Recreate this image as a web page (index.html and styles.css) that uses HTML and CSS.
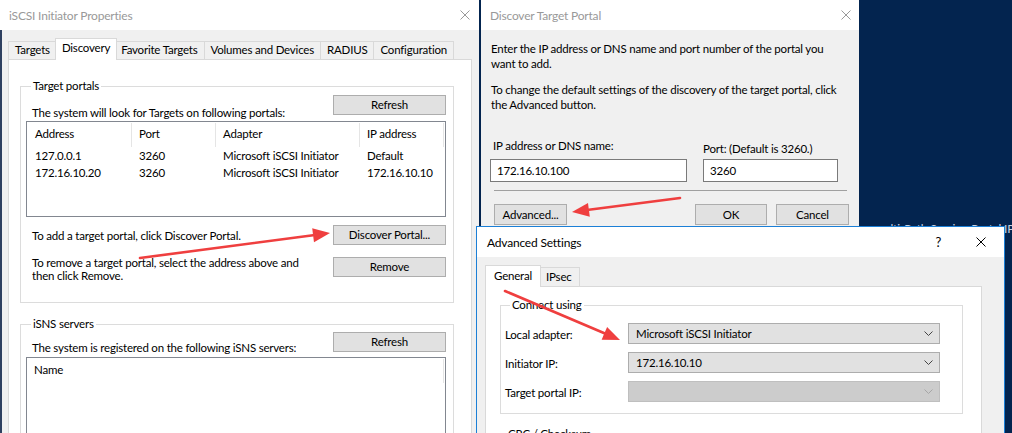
FILE: index.html
```html
<!DOCTYPE html>
<html>
<head>
<meta charset="utf-8">
<title>iSCSI Initiator</title>
<link rel="stylesheet" href="styles.css">
</head>
<body>
<div class="desktop">
  <div class="bgtext">ulti-Path  Session  Portal  IP Address  8</div>

  <section class="win win-props">
    <header class="titlebar inactive">
      <span class="title">iSCSI Initiator Properties</span>
      <span class="ctrls"><svg class="xicon" viewBox="0 0 10 10"><path d="M0.5 0.5L9.5 9.5M9.5 0.5L0.5 9.5"/></svg></span>
    </header>
    <div class="win-body props-body">
      <div class="tabs">
        <div class="tab">Targets</div>
        <div class="tab sel">Discovery</div>
        <div class="tab">Favorite Targets</div>
        <div class="tab">Volumes and Devices</div>
        <div class="tab">RADIUS</div>
        <div class="tab">Configuration</div>
      </div>
      <div class="tabpanel props-panel">
        <fieldset class="group gp-portals">
          <legend>Target portals</legend>
          <div class="row row-top">
            <span class="desc desc-top">The system will look for Targets on following portals:</span>
            <button class="btn btn-wide">Refresh</button>
          </div>
          <div class="listbox lb-portals">
            <div class="lv-grid lv-head">
              <span>Address</span><span>Port</span><span>Adapter</span><span>IP address</span>
            </div>
            <div class="lv-grid lv-row">
              <span>127.0.0.1</span><span>3260</span><span>Microsoft iSCSI Initiator</span><span>Default</span>
            </div>
            <div class="lv-grid lv-row">
              <span>172.16.10.20</span><span>3260</span><span>Microsoft iSCSI Initiator</span><span>172.16.10.10</span>
            </div>
          </div>
          <div class="row row-add">
            <span class="desc">To add a target portal, click Discover Portal.</span>
            <button class="btn btn-wide">Discover Portal...</button>
          </div>
          <div class="row row-remove">
            <span class="desc desc-2l">To remove a target portal, select the address above and<br>then click Remove.</span>
            <button class="btn btn-wide">Remove</button>
          </div>
        </fieldset>

        <fieldset class="group gp-isns">
          <legend>iSNS servers</legend>
          <div class="row row-top">
            <span class="desc desc-isns">The system is registered on the following iSNS servers:</span>
            <button class="btn btn-wide">Refresh</button>
          </div>
          <div class="listbox lb-isns">
            <div class="lv-head lv-single"><span>Name</span></div>
          </div>
        </fieldset>
      </div>
    </div>
  </section>

  <section class="win win-discover">
    <header class="titlebar inactive">
      <span class="title">Discover Target Portal</span>
      <span class="ctrls"><svg class="xicon" viewBox="0 0 10 10"><path d="M0.5 0.5L9.5 9.5M9.5 0.5L0.5 9.5"/></svg></span>
    </header>
    <div class="win-body disc-body">
      <p class="para">Enter the IP address or DNS name and port number of the portal you<br>want to add.</p>
      <p class="para para2">To change the default settings of the discovery of the target portal, click<br>the Advanced button.</p>
      <div class="fields">
        <div class="field field-ip">
          <label class="flabel">IP address or DNS name:</label>
          <div class="textbox">172.16.10.100</div>
        </div>
        <div class="field field-port">
          <label class="flabel">Port: (Default is 3260.)</label>
          <div class="textbox">3260</div>
        </div>
      </div>
      <div class="sep"></div>
      <div class="btnrow">
        <button class="btn btn-dlg">Advanced...</button>
        <span class="spacer"></span>
        <button class="btn btn-dlg btn-ok">OK</button>
        <button class="btn btn-dlg">Cancel</button>
      </div>
    </div>
  </section>

  <section class="win win-adv">
    <header class="titlebar active">
      <span class="title">Advanced Settings</span>
      <span class="ctrls ctrls-adv"><span class="help">?</span><svg class="xicon" viewBox="0 0 10 10"><path d="M0.5 0.5L9.5 9.5M9.5 0.5L0.5 9.5"/></svg></span>
    </header>
    <div class="win-body adv-body">
      <div class="tabs tabs-adv">
        <div class="tab sel">General</div>
        <div class="tab">IPsec</div>
      </div>
      <div class="tabpanel adv-panel">
        <fieldset class="group gp-connect">
          <legend>Connect using</legend>
          <div class="crow">
            <span class="clabel">Local adapter:</span>
            <div class="combo"><span>Microsoft iSCSI Initiator</span><svg class="chev" viewBox="0 0 9 5"><path d="M0.5 0.5L4.5 4.5L8.5 0.5"/></svg></div>
          </div>
          <div class="crow">
            <span class="clabel">Initiator IP:</span>
            <div class="combo"><span>172.16.10.10</span><svg class="chev" viewBox="0 0 9 5"><path d="M0.5 0.5L4.5 4.5L8.5 0.5"/></svg></div>
          </div>
          <div class="crow">
            <span class="clabel">Target portal IP:</span>
            <div class="combo disabled"><span></span><svg class="chev" viewBox="0 0 9 5"><path d="M0.5 0.5L4.5 4.5L8.5 0.5"/></svg></div>
          </div>
        </fieldset>
        <fieldset class="group gp-crc">
          <legend>CRC / Checksum</legend>
          <div class="crc-fill"></div>
        </fieldset>
      </div>
    </div>
  </section>

  <svg class="arrows" viewBox="0 0 1012 433" width="1012" height="433">
    <g class="arrow">
      <line x1="140" y1="258" x2="313.1" y2="235.2"/>
      <polygon points="330,233 314,242.2 312.2,228.3"/>
    </g>
    <g class="arrow">
      <line x1="680" y1="198" x2="588.9" y2="209.8"/>
      <polygon points="572,212 588,202.9 589.8,216.7"/>
    </g>
    <g class="arrow">
      <line x1="505" y1="291" x2="604.4" y2="333.3"/>
      <polygon points="620,340 601.6,339.8 607.1,326.9"/>
    </g>
  </svg>
</div>
</body>
</html>
```

FILE: styles.css
```css
* { box-sizing: border-box; }

html, body {
  margin: 0;
  padding: 0;
}

body {
  width: 1012px;
  height: 433px;
  overflow: hidden;
  background: #03244f;
  font-family: Lato, "Liberation Sans", sans-serif;
  font-size: 11.5px;
  letter-spacing: -0.2px;
  color: #000;
}

.desktop {
  position: relative;
  width: 1012px;
  height: 433px;
  overflow: hidden;
}

.bgtext {
  position: absolute;
  left: 884px;
  top: 221px;
  color: #c9d3e3;
  font-size: 12px;
  white-space: nowrap;
}

/* windows */
.win {
  position: absolute;
  display: flex;
  flex-direction: column;
  background: #f0f0f0;
}

.win-props { left: 0; top: 0; width: 479px; height: 470px; }
.win-discover { left: 481px; top: 0; width: 378px; height: 300px; }
.win-adv { left: 476px; top: 226px; width: 529px; height: 240px; border: 1px solid #1b7fd6; }

.titlebar {
  flex: none;
  height: 30px;
  background: #fff;
  display: flex;
  align-items: center;
  justify-content: space-between;
  padding: 0 9px;
  font-size: 12px;
}

.titlebar.inactive { color: #999; }
.titlebar.active { color: #000; padding: 0 18px 0 10px; }

.win-discover .titlebar { padding-right: 8px; }

.ctrls { display: flex; align-items: center; }
.ctrls-adv { gap: 35px; }
.help { font-size: 13px; line-height: 14px; }

.xicon {
  width: 10px;
  height: 10px;
  display: block;
  fill: none;
  stroke: currentColor;
  stroke-width: 1;
}

.win-body { flex: 1; }

.props-body {
  padding: 7px 0 0 6px;
  border-left: 2px solid #2e4060;
}

/* tabs */
.tabs {
  display: flex;
  align-items: flex-end;
  height: 22px;
  position: relative;
  z-index: 1;
}

.tab {
  height: 18px;
  line-height: 16px;
  padding: 0 6px;
  border: 1px solid #d9d9d9;
  border-bottom: none;
  margin-left: -1px;
  background: #f0f0f0;
  white-space: nowrap;
}

.tab:first-child { margin-left: 0; }

.tab.sel {
  height: 22px;
  line-height: 18px;
  background: #fff;
  margin-bottom: -1px;
  padding: 0 6px;
  margin-left: -2px;
  margin-right: -2px;
  position: relative;
  z-index: 2;
}

.tab.sel:first-child { margin-left: 0; }

.tabpanel {
  background: #fff;
  border: 1px solid #d9d9d9;
}

.props-panel {
  width: 464px;
  padding: 19px 17px 0 11px;
  height: 420px;
}

/* group boxes */
.group {
  margin: 0;
  border: 1px solid #dcdcdc;
  min-width: 0;
}

.group legend {
  padding: 0 2px;
  margin-left: 5px;
  line-height: 14px;
  color: #000;
}

.gp-portals { padding: 2px 7px 20px 5px; }
.gp-isns { padding: 1px 7px 0 5px; margin-top: 14px; }

.row {
  display: flex;
  justify-content: space-between;
}

.desc {
  padding-left: 6px;
  white-space: nowrap;
  line-height: 15px;
}

.row-top { align-items: flex-start; height: 20px; }
.desc-top { margin-top: 10px; }
.desc-isns { margin-top: 8px; }

.row-add { margin-top: 8px; align-items: center; }
.row-remove { margin-top: 12px; align-items: flex-start; }
.desc-2l { line-height: 13px; margin-top: -1px; }

.btn {
  font: inherit;
  letter-spacing: inherit;
  color: #000;
  background: #e1e1e1;
  border: 1px solid #adadad;
  padding: 0;
  height: 20px;
  line-height: 18px;
  text-align: center;
  flex: none;
}

.btn-wide { width: 113px; }

/* listview */
.listbox {
  background: #fff;
  border: 1px solid #828790;
  padding: 1px 0 0 1px;
}

.lb-portals { margin-top: 6px; height: 96px; }
.lb-isns { margin-top: 5px; height: 120px; }

.lv-grid {
  display: grid;
  grid-template-columns: 104px 84px 144px 84px 1fr;
}

.lv-head span {
  height: 24px;
  line-height: 22px;
  padding-left: 7px;
  border-right: 1px solid #e5e5e5;
  white-space: nowrap;
}

.lv-single {
  display: grid;
  grid-template-columns: 416px 1fr;
}

.lv-single span { padding-left: 6px; }

.lv-row span {
  height: 17px;
  line-height: 17px;
  padding-left: 7px;
  white-space: nowrap;
}

/* discover dialog */
.disc-body {
  padding: 11px 0 0 10px;
}

.para {
  margin: 0;
  line-height: 15px;
}

.para2 { margin-top: 11px; }

.fields {
  display: flex;
  margin-top: 26px;
  margin-left: -1px;
}

.field { display: flex; flex-direction: column; }
.field-ip { width: 197px; }
.field-port { width: 135px; margin-left: 16px; }

.flabel {
  line-height: 15px;
  white-space: nowrap;
}

.field-ip .flabel { padding-left: 3px; margin-bottom: 6px; }
.field-port .flabel { margin-top: 3px; margin-bottom: 3px; }

.textbox {
  height: 23px;
  border: 1px solid #7a7a7a;
  background: #fff;
  padding-left: 6px;
  line-height: 21px;
}

.sep {
  height: 1px;
  background: #a0a0a0;
  margin: 8px 12px 0 3px;
}

.btnrow {
  display: flex;
  margin: 13px 10px 0 3px;
}

.spacer { flex: 1; }

.btn-dlg { width: 73px; height: 21px; line-height: 19px; }
.btn-ok { width: 72px; margin-right: 9px; }

/* advanced settings */
.adv-body {
  padding: 7px 22px 0 8px;
}

.tabs-adv .tab { height: 19px; line-height: 17px; padding: 0 7px; }
.tabs-adv .tab.sel { height: 22px; line-height: 19px; padding: 0 8px; }

.adv-panel {
  padding: 11px 18px 0 14px;
  height: 160px;
}

.gp-connect { padding: 11px 22px 11px 4px; }

.crow {
  display: flex;
  align-items: center;
  margin-top: 8px;
}

.crow:first-of-type { margin-top: 0; }

.clabel {
  width: 123px;
  flex: none;
  line-height: 15px;
  padding-top: 2px;
  white-space: nowrap;
}

.combo {
  width: 312px;
  height: 21px;
  background: #e1e1e1;
  border: 1px solid #adadad;
  display: flex;
  align-items: center;
  justify-content: space-between;
  padding: 0 6px 0 7px;
}

.combo.disabled {
  background: #cccccc;
  border-color: #bfbfbf;
  color: #a0a0a0;
}

.chev {
  width: 9px;
  height: 5px;
  fill: none;
  stroke: #444;
  stroke-width: 1;
}

.combo.disabled .chev { stroke: #a6a6a6; }

.gp-crc { margin-top: 13px; padding: 0; }
.crc-fill { height: 40px; }

/* annotation arrows */
.arrows {
  position: absolute;
  left: 0;
  top: 0;
  pointer-events: none;
}

.arrow line {
  stroke: #ef3f3f;
  stroke-width: 2.6;
  stroke-linecap: round;
}

.arrow polygon { fill: #ef3f3f; }
```
